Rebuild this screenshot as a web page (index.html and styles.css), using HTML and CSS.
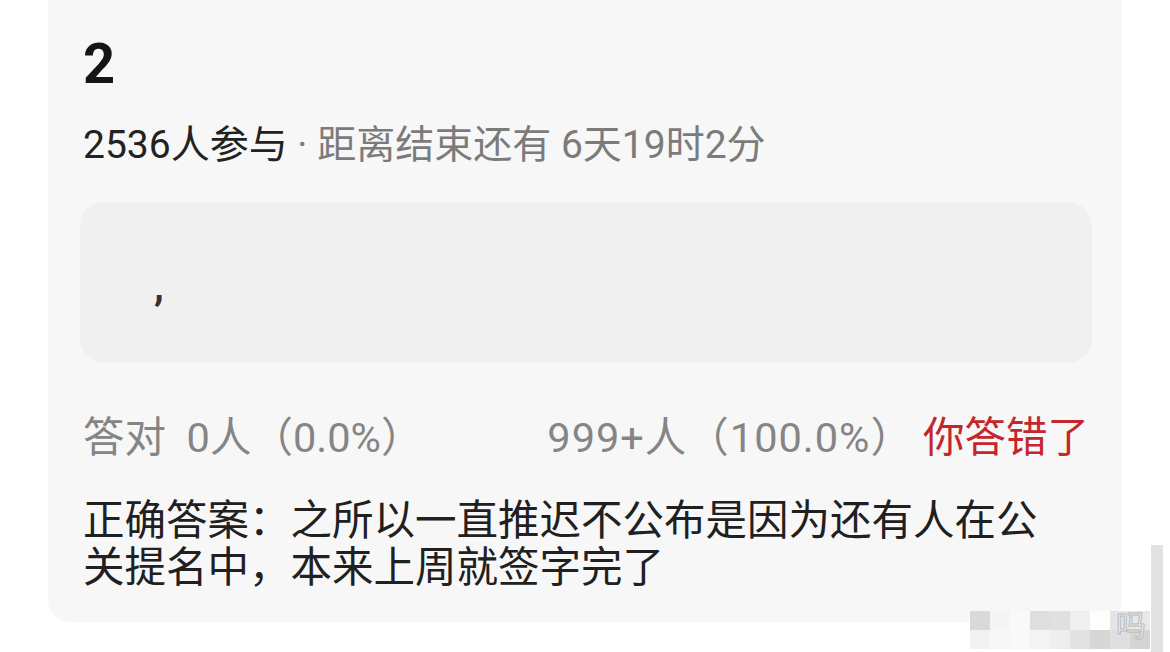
FILE: index.html
```html
<!DOCTYPE html>
<html lang="zh-CN">
<head>
  <meta charset="UTF-8" />
  <meta name="viewport" content="width=device-width, initial-scale=1.0"/>
  <title>竞猜结果</title>
  <link rel="stylesheet" href="styles.css">
</head>
<body>
  <div class="card">
    <div class="rank">2</div>
    <div class="meta">
      <span class="count">2536人参与</span><span class="muted"> · 距离结束还有 6天19时2分</span>
    </div>

    <div class="option">,</div>

    <div class="stats">
      <span class="stat">答对&nbsp;&nbsp;0人（0.0%）</span>
      <div class="stats-right">
        <span class="stat wide">999+人（100.0%）</span>
        <span class="verdict">你答错了</span>
      </div>
    </div>

    <p class="answer">正确答案：之所以一直推迟不公布是因为还有人在公关提名中，本来上周就签字完了</p>
  </div>

  <div class="watermark">
    <span class="wm-bar"></span>
    <div class="wm-grid">
      <i style="background:#d9d9d9"></i><i style="background:#f4f4f4"></i><i style="background:#f9f9f9"></i><i style="background:#dedede"></i><i style="background:#e0e0e0"></i><i style="background:#efefef"></i><i style="background:#fdfdfd"></i><i style="background:#e4e4e4"></i><i style="background:#e8e8e8"></i>
      <i style="background:#f1f1f1"></i><i style="background:#f7f7f7"></i><i style="background:#f9f9f9"></i><i style="background:#f3f3f3"></i><i style="background:#eeeeee"></i><i style="background:#e2e2e2"></i><i style="background:#d6d6d6"></i><i style="background:#dfdfdf"></i><i style="background:#d4d4d4"></i>
    </div>
    <span class="wm-text">吗</span>
  </div>
</body>
</html>
```

FILE: styles.css
```css
body {
  margin: 0;
  background: #fff;
  font-family: Roboto, "Noto Sans CJK SC", sans-serif;
  color: #1e1e1e;
  overflow: hidden;
}
.card {
  width: 1004px;
  margin: -20px 0 0 48px;
  padding: 52px 35px 10px;
  background: #f7f7f7;
  border-radius: 22px;
  height: 580px;
}
.rank {
  font-size: 56px;
  font-weight: 700;
  line-height: 64px;
  color: #151515;
}
.meta {
  margin-top: 24px;
  font-size: 39px;
  line-height: 50px;
}
.count {
  color: #222;
}
.muted {
  color: #7b7b7b;
}
.option {
  margin: 32px -5px 0 -3px;
  height: 161px;
  box-sizing: border-box;
  padding: 60px 0 0 74px;
  background: #f0f0f0;
  border-radius: 24px;
  font-size: 40px;
  line-height: 50px;
  font-weight: 700;
  color: #333;
}
.stats {
  display: flex;
  align-items: center;
  margin-top: 50px;
  font-size: 41.5px;
  line-height: 50px;
}
.stat {
  color: #858585;
}
.stat.wide {
  letter-spacing: 1px;
}
.stats-right {
  margin-left: auto;
  display: flex;
  gap: 10px;
  margin-right: -2px;
}
.verdict {
  color: #c4262d;
}
.answer {
  margin: 34px 0 0;
  max-width: 975px;
  font-size: 41.5px;
  line-height: 47px;
  color: #202020;
}

/* faint pixelated watermark over the bottom right corner */
.watermark {
  position: absolute;
  left: 970px;
  top: 545px;
  width: 200px;
  height: 107px;
}
.wm-bar {
  position: absolute;
  left: 181px;
  top: 0;
  width: 12px;
  height: 107px;
  background: #e2e2e2;
}
.wm-grid {
  position: absolute;
  left: 0;
  top: 66px;
  display: grid;
  grid-template-columns: repeat(9, 20px);
  grid-auto-rows: 19px;
}
.wm-grid i {
  display: block;
}
.wm-text {
  position: absolute;
  left: 146px;
  top: 64px;
  font-size: 30px;
  line-height: 34px;
  color: #f4f4f4;
  -webkit-text-stroke: 1px #b8b8b8;
}
```
